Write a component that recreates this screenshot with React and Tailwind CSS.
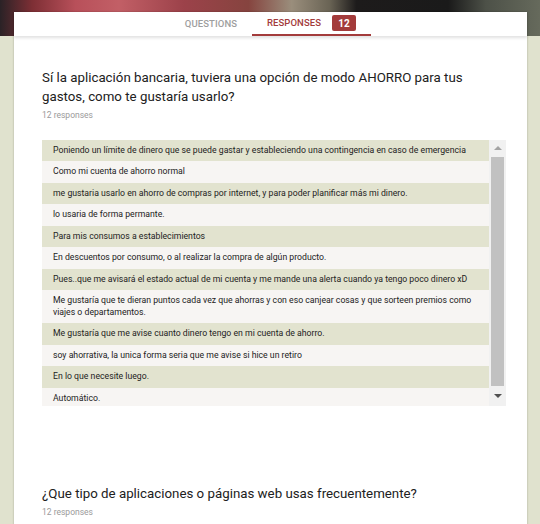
import React from "react";

const rows = [
  "Poniendo un límite de dinero que se puede gastar y estableciendo una contingencia en caso de emergencia",
  "Como mi cuenta de ahorro normal",
  "me gustaria usarlo en ahorro de compras por internet, y para poder planificar más mi dinero.",
  "lo usaria de forma permante.",
  "Para mis consumos a establecimientos",
  "En descuentos por consumo, o al realizar la compra de algún producto.",
  "Pues..que me avisará el estado actual de mi cuenta y me mande una alerta cuando ya tengo poco dinero xD",
  "Me gustaría que te dieran puntos cada vez que ahorras y con eso canjear cosas y que sorteen premios como viajes o departamentos.",
  "Me gustaría que me avise cuanto dinero tengo en mi cuenta de ahorro.",
  "soy ahorrativa, la unica forma seria que me avise si hice un retiro",
  "En lo que necesite luego.",
  "Automático.",
];

export default function App() {
  return (
    <div className="min-h-screen bg-[#e0e2ce] font-['Roboto',sans-serif] overflow-hidden">
      <div className="h-[36px] bg-[linear-gradient(90deg,#2a2226_0%,#7e2f35_6%,#b8505a_14%,#c25f66_22%,#9c424a_34%,#86443f_46%,#9a8e7c_54%,#6a6455_61%,#1d1b1b_66%,#1a1a1a_83%,#4d5148_90%,#666a5c_100%)]" />
      <div className="relative -mt-[24px] ml-[14px] w-[513px] bg-white shadow-[0_0_2px_rgba(0,0,0,0.25)] h-[520px]">
        <div className="h-[24px] flex justify-center shadow-[0_2px_3px_rgba(0,0,0,0.12)] relative">
          <div className="w-[82px] flex items-center justify-center text-[9.5px] font-medium text-[#9e9e9e] tracking-[0.1px]">
            QUESTIONS
          </div>
          <div className="w-[119px] flex items-center justify-center gap-[11px] border-b-2 border-[#a33b3b]">
            <span className="text-[9.5px] font-medium text-[#a33b3b] tracking-[0.1px]">RESPONSES</span>
            <span className="w-[24px] h-[16px] rounded-[2px] bg-[#a33b3b] text-white text-[10px] font-bold flex items-center justify-center">12</span>
          </div>
        </div>
        <div className="pl-[28px] pr-[21px] pt-[32px]">
          <div className="max-w-[440px] text-[13.3px] leading-[19px] text-[#212121]">
            Sí la aplicación bancaria, tuviera una opción de modo AHORRO para tus gastos, como te gustaría usarlo?
          </div>
          <div className="mt-[3px] text-[8.5px] text-[#9a9a9a]">12 responses</div>
          <div className="mt-[18px] flex h-[266px]">
            <div className="flex-1 overflow-hidden">
              {rows.map((r, i) => (
                <div
                  key={i}
                  className={`px-[11px] py-[5px] text-[8.7px] leading-[11.5px] text-[#222] ${i % 2 === 0 ? "bg-[#e2e3cf]" : "bg-[#f7f5f3]"}`}
                >
                  {r}
                </div>
              ))}
            </div>
            <div className="w-[17px] bg-[#f1f1f1] flex flex-col items-center">
              <div className="h-[17px] flex items-center justify-center">
                <div className="w-0 h-0 border-l-[4px] border-r-[4px] border-b-[4px] border-l-transparent border-r-transparent border-b-[#a3a3a3]" />
              </div>
              <div className="w-[13px] h-[229px] bg-[#c1c1c1]" />
              <div className="flex-1 flex items-center justify-center">
                <div className="w-0 h-0 border-l-[4px] border-r-[4px] border-t-[4px] border-l-transparent border-r-transparent border-t-[#505050]" />
              </div>
            </div>
          </div>
          <div className="mt-[78px] text-[13.3px] leading-[19px] text-[#212121]">
            ¿Que tipo de aplicaciones o páginas web usas frecuentemente?
          </div>
          <div className="mt-[3px] text-[8.5px] text-[#9a9a9a]">12 responses</div>
        </div>
      </div>
    </div>
  );
}
